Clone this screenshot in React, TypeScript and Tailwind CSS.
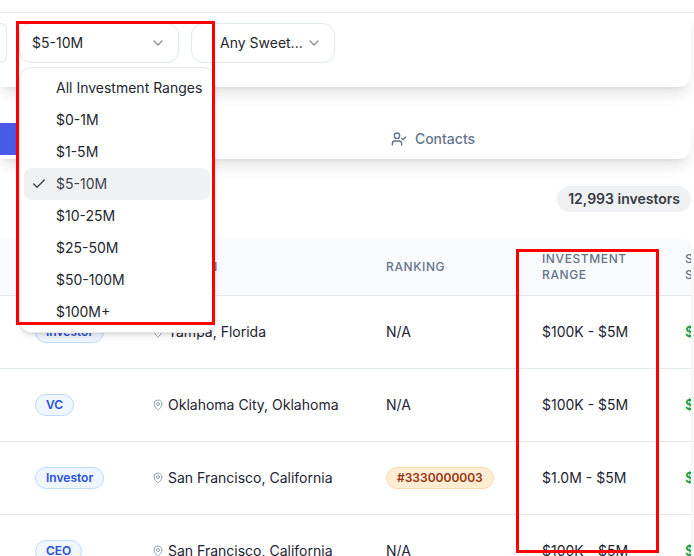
import { Check, ChevronDown, MapPin, UserCheck } from "lucide-react";

const ranges = [
  "All Investment Ranges",
  "$0-1M",
  "$1-5M",
  "$5-10M",
  "$10-25M",
  "$25-50M",
  "$50-100M",
  "$100M+",
];
const selected = "$5-10M";

const investors = [
  { type: "Investor", location: "Tampa, Florida", ranking: "N/A", range: "$100K - $5M" },
  { type: "VC", location: "Oklahoma City, Oklahoma", ranking: "N/A", range: "$100K - $5M" },
  { type: "Investor", location: "San Francisco, California", ranking: "#3330000003", range: "$1.0M - $5M" },
  { type: "CEO", location: "San Francisco, California", ranking: "N/A", range: "$100K - $5M" },
];

function RangeFilter() {
  return (
    <div className="relative w-40 shrink-0">
      <button
        type="button"
        role="combobox"
        aria-expanded="true"
        aria-controls="range-list"
        aria-label="Investment range"
        className="flex h-10 w-full items-center justify-between rounded-xl border border-slate-200 bg-white px-3 text-sm"
      >
        <span>{selected}</span>
        <ChevronDown className="size-4 text-[#8e9196]" />
      </button>
      <ul
        id="range-list"
        role="listbox"
        className="absolute top-full left-0 z-20 mt-1 w-max rounded-xl border border-gray-200 bg-white p-1 shadow-md"
      >
        {ranges.map((range) => (
          <li
            key={range}
            role="option"
            aria-selected={range === selected}
            className={
              range === selected
                ? "flex h-8 items-center rounded-lg bg-[#f0f1f3] pr-2 pl-[7px] text-sm text-[#3d424d]"
                : "flex h-8 items-center rounded-lg pr-2 pl-8 text-sm"
            }
          >
            {range === selected && <Check className="mr-[9px] size-4" />}
            {range}
          </li>
        ))}
      </ul>
      <div className="pointer-events-none absolute -top-0.5 -left-[3px] z-30 h-[304px] w-[199px] border-3 border-[#ff0000]" />
    </div>
  );
}

export default function App() {
  return (
    <div className="h-screen overflow-hidden bg-white font-['Inter',sans-serif] text-[#24272e]">
      <header className="h-[13px] border-b border-gray-200" />
      <main className="pr-[3px]">
        <section
          aria-label="Filters"
          className="relative z-10 flex gap-3 rounded-br-xl bg-white pt-2.5 pb-6 shadow-lg"
        >
          <button
            type="button"
            aria-label="Previous filter"
            className="h-10 w-[7px] shrink-0 rounded-r-xl border border-l-0 border-slate-200"
          />
          <RangeFilter />
          <div className="relative w-36">
            <select
              aria-label="Sweet spot"
              className="h-10 w-full appearance-none rounded-xl border border-slate-200 bg-white pl-7 text-sm"
            >
              <option>Any Sweet...</option>
            </select>
            <ChevronDown className="pointer-events-none absolute top-3 right-[13px] size-4 text-[#8e9196]" />
          </div>
        </section>

        <div role="tablist" className="mt-8 flex rounded-r-xl bg-white py-1 shadow-lg">
          <button
            type="button"
            role="tab"
            aria-selected="true"
            aria-label="Investors"
            className="h-8 w-[175px] bg-[#4a5ae8]"
          />
          <button
            type="button"
            role="tab"
            aria-selected="false"
            className="flex h-8 flex-1 items-center justify-center gap-2 text-sm font-medium text-[#64748b]"
          >
            <UserCheck className="size-4" />
            Contacts
          </button>
        </div>

        <div className="mt-[27px] flex justify-end">
          <p className="rounded-full bg-[#f0f1f3] px-[11px] py-[3px] text-sm font-semibold text-[#363a43]">
            12,993 investors
          </p>
        </div>

        <div className="mt-[27px] overflow-hidden rounded-tr-lg shadow-lg">
          <table className="w-full table-fixed border-collapse text-left text-sm text-[#1e2433]">
            <colgroup>
              <col className="w-[19px]" />
              <col className="w-[117px]" />
              <col className="w-[234px]" />
              <col className="w-[156px]" />
              <col className="w-[143px]" />
              <col />
            </colgroup>
            <thead className="bg-[#f9fafd] text-xs tracking-wider text-[#64748b] uppercase">
              <tr className="h-14 border-b border-slate-200">
                <td />
                <th className="px-4 font-medium">Type</th>
                <th className="px-4 font-medium">Location</th>
                <th className="px-4 font-medium">Ranking</th>
                <th className="px-4 font-medium">Investment Range</th>
                <th className="pl-4 font-medium">
                  S<br />S
                </th>
              </tr>
            </thead>
            <tbody>
              {investors.map((row, index) => (
                <tr key={index} className="h-[73px] border-b border-slate-200">
                  <td />
                  <td className="px-4">
                    <span className="inline-flex rounded-full border border-blue-200 bg-blue-50 px-2.5 py-0.5 text-xs font-semibold text-[#2850d8]">
                      {row.type}
                    </span>
                  </td>
                  <td className="px-4">
                    <span className="flex items-center gap-1 whitespace-nowrap">
                      <MapPin className="size-3 text-slate-400" />
                      {row.location}
                    </span>
                  </td>
                  <td className="px-4">
                    {row.ranking === "N/A" ? (
                      row.ranking
                    ) : (
                      <span className="inline-flex rounded-full border border-orange-200 bg-orange-100 px-2.5 py-0.5 text-xs font-semibold text-[#9a3412]">
                        {row.ranking}
                      </span>
                    )}
                  </td>
                  <td className="px-4">{row.range}</td>
                  <td className="overflow-hidden pl-4 font-semibold text-[#16a34a]">$</td>
                </tr>
              ))}
            </tbody>
          </table>
        </div>
      </main>
      <div className="pointer-events-none absolute top-[249px] left-[516px] z-30 h-[304px] w-[143px] border-3 border-[#ff0000]" />
    </div>
  );
}
